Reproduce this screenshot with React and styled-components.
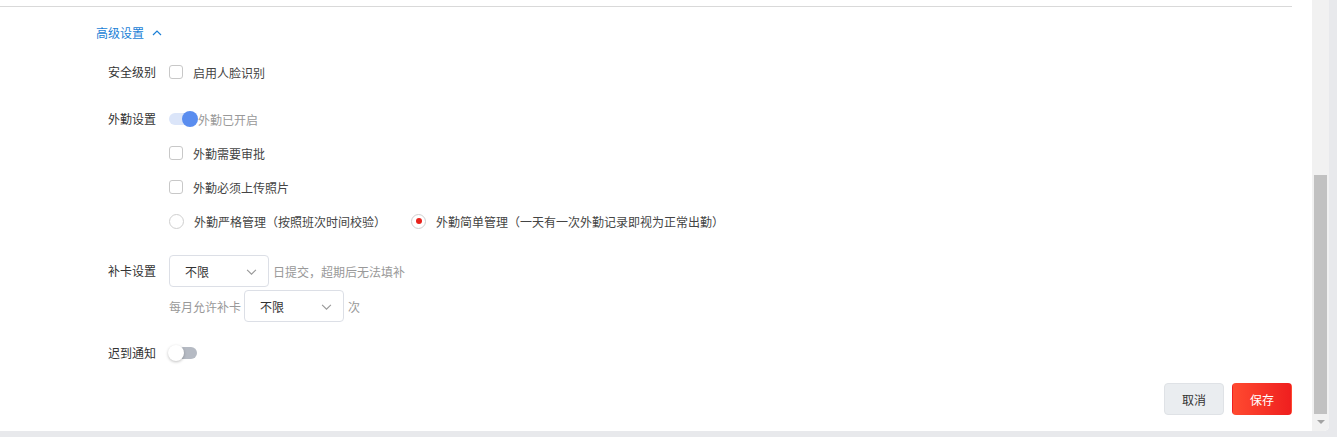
import styled, { createGlobalStyle } from "styled-components";

const GlobalStyle = createGlobalStyle`
  html, body {
    margin: 0;
    padding: 0;
    background: #e8e9ec;
    font-family: "Noto Sans CJK SC", "Noto Sans", sans-serif;
  }
`;

const Frame = styled.div`
  width: 1329px;
  height: 431px;
  display: flex;
  background: #fff;
  border-bottom-right-radius: 5px;
  overflow: hidden;
`;

const Content = styled.div`
  flex: 1;
  display: flex;
  flex-direction: column;
  padding-top: 6px;
`;

const Divider = styled.div`
  width: 1292px;
  height: 1px;
  background: #d9d9d9;
`;

const Toggle = styled.div`
  margin: 16px 0 0 96px;
  height: 20px;
  display: flex;
  align-items: center;
  gap: 8px;
  color: #1b7fd6;
  font-size: 12px;
  line-height: 20px;
`;

const Form = styled.div`
  margin-left: 96px;
  display: flex;
  flex-direction: column;
`;

const Row = styled.div`
  display: flex;
  align-items: flex-start;
  margin-top: ${(p) => p.$top}px;
`;

const Label = styled.div`
  width: 60px;
  margin-right: 13px;
  text-align: right;
  font-size: 12px;
  line-height: ${(p) => p.$lh || 20}px;
  color: #333;
  flex-shrink: 0;
`;

const Stack = styled.div`
  display: flex;
  flex-direction: column;
  gap: ${(p) => p.$gap}px;
`;

const Line = styled.div`
  display: flex;
  align-items: center;
  height: ${(p) => p.$h || 20}px;
  font-size: 12px;
  color: #444;
`;

const Check = styled.span`
  width: 12px;
  height: 12px;
  border: 1px solid #c8c8c8;
  border-radius: 3px;
  margin-right: 10px;
  box-sizing: content-box;
`;

const Radio = styled.span`
  width: 13px;
  height: 13px;
  border: 1px solid #cfcfcf;
  border-radius: 50%;
  margin-right: 10px;
  display: flex;
  align-items: center;
  justify-content: center;
  &::after {
    content: "";
    display: ${(p) => (p.$on ? "block" : "none")};
    width: 6px;
    height: 6px;
    border-radius: 50%;
    background: #e8231c;
  }
`;

const RadioOption = styled.span`
  display: flex;
  align-items: center;
  margin-right: 25px;
`;

const Switch = styled.span`
  position: relative;
  width: 29px;
  height: 16px;
  display: inline-block;
  &::before {
    content: "";
    position: absolute;
    top: 2px;
    left: ${(p) => (p.$on ? 0 : 3)}px;
    width: ${(p) => (p.$on ? 22 : 25)}px;
    height: 12px;
    border-radius: 6px;
    background: ${(p) => (p.$on ? "#dbe5f9" : "#b5bac3")};
  }
  &::after {
    content: "";
    position: absolute;
    top: 0;
    left: ${(p) => (p.$on ? 13 : -1)}px;
    width: 16px;
    height: 16px;
    border-radius: 50%;
    background: ${(p) => (p.$on ? "#5a8def" : "#fff")};
    box-shadow: ${(p) => (p.$on ? "none" : "0 1px 3px rgba(0,0,0,0.25)")};
  }
`;

const Hint = styled.span`
  color: #999;
  font-size: 12px;
  margin-left: ${(p) => p.$ml || 0}px;
  margin-right: ${(p) => p.$mr || 0}px;
`;

const Select = styled.div`
  height: 30px;
  border: 1px solid #dcdfe6;
  border-radius: 4px;
  display: flex;
  align-items: center;
  justify-content: space-between;
  padding: 0 11px 0 15px;
  box-sizing: content-box;
  width: 72px;
  font-size: 12px;
  color: #333;
  margin-right: 4px;
`;

const Footer = styled.div`
  display: flex;
  justify-content: flex-end;
  gap: 8px;
  padding-right: 20px;
  margin-top: 20px;
`;

const Button = styled.button`
  width: 60px;
  height: 32px;
  border-radius: 4px;
  font-family: inherit;
  font-size: 12px;
  cursor: pointer;
  border: 1px solid ${(p) => (p.$primary ? "transparent" : "#dfe2e6")};
  background: ${(p) =>
    p.$primary ? "linear-gradient(90deg, #ff4a30, #ef1f1f)" : "#eaedf0"};
  color: ${(p) => (p.$primary ? "#fff" : "#333")};
`;

const Scrollbar = styled.div`
  width: 17px;
  background: #f1f1f1;
  display: flex;
  flex-direction: column;
  align-items: center;
`;

const Thumb = styled.div`
  margin-top: 175px;
  width: 13px;
  height: 239px;
  background: #c1c1c1;
`;

const Arrow = styled.div`
  margin-top: 6px;
  width: 0;
  height: 0;
  border-left: 4px solid transparent;
  border-right: 4px solid transparent;
  border-top: 4px solid #a3a3a3;
`;

const Chevron = ({ size = 10, color = "#1b7fd6" }) => (
  <svg width={size} height={size} viewBox="0 0 10 10" fill="none">
    <path d="M1 7 L5 3 L9 7" stroke={color} strokeWidth="1.2" />
  </svg>
);

const ChevronDown = () => (
  <svg width="11" height="11" viewBox="0 0 10 10" fill="none">
    <path d="M1 3.5 L5 7.5 L9 3.5" stroke="#999" strokeWidth="1" />
  </svg>
);

export default function App() {
  return (
    <>
      <GlobalStyle />
      <Frame>
        <Content>
          <Divider />
          <Toggle>
            高级设置 <Chevron />
          </Toggle>
          <Form>
            <Row $top={19}>
              <Label>安全级别</Label>
              <Line>
                <Check />
                启用人脸识别
              </Line>
            </Row>
            <Row $top={27}>
              <Label>外勤设置</Label>
              <Stack $gap={14}>
                <Line>
                  <Switch $on />
                  <Hint>外勤已开启</Hint>
                </Line>
                <Line>
                  <Check />
                  外勤需要审批
                </Line>
                <Line>
                  <Check />
                  外勤必须上传照片
                </Line>
                <Line>
                  <RadioOption>
                    <Radio />
                    外勤严格管理（按照班次时间校验）
                  </RadioOption>
                  <RadioOption>
                    <Radio $on />
                    外勤简单管理（一天有一次外勤记录即视为正常出勤）
                  </RadioOption>
                </Line>
              </Stack>
            </Row>
            <Row $top={24}>
              <Label $lh={32}>补卡设置</Label>
              <Stack $gap={3}>
                <Line $h={32}>
                  <Select>
                    不限 <ChevronDown />
                  </Select>
                  <Hint>日提交，超期后无法填补</Hint>
                </Line>
                <Line $h={32}>
                  <Hint $mr={3}>每月允许补卡</Hint>
                  <Select>
                    不限 <ChevronDown />
                  </Select>
                  <Hint>次</Hint>
                </Line>
              </Stack>
            </Row>
            <Row $top={21}>
              <Label>迟到通知</Label>
              <Line>
                <Switch />
              </Line>
            </Row>
          </Form>
          <Footer>
            <Button>取消</Button>
            <Button $primary>保存</Button>
          </Footer>
        </Content>
        <Scrollbar>
          <Thumb />
          <Arrow />
        </Scrollbar>
      </Frame>
    </>
  );
}
